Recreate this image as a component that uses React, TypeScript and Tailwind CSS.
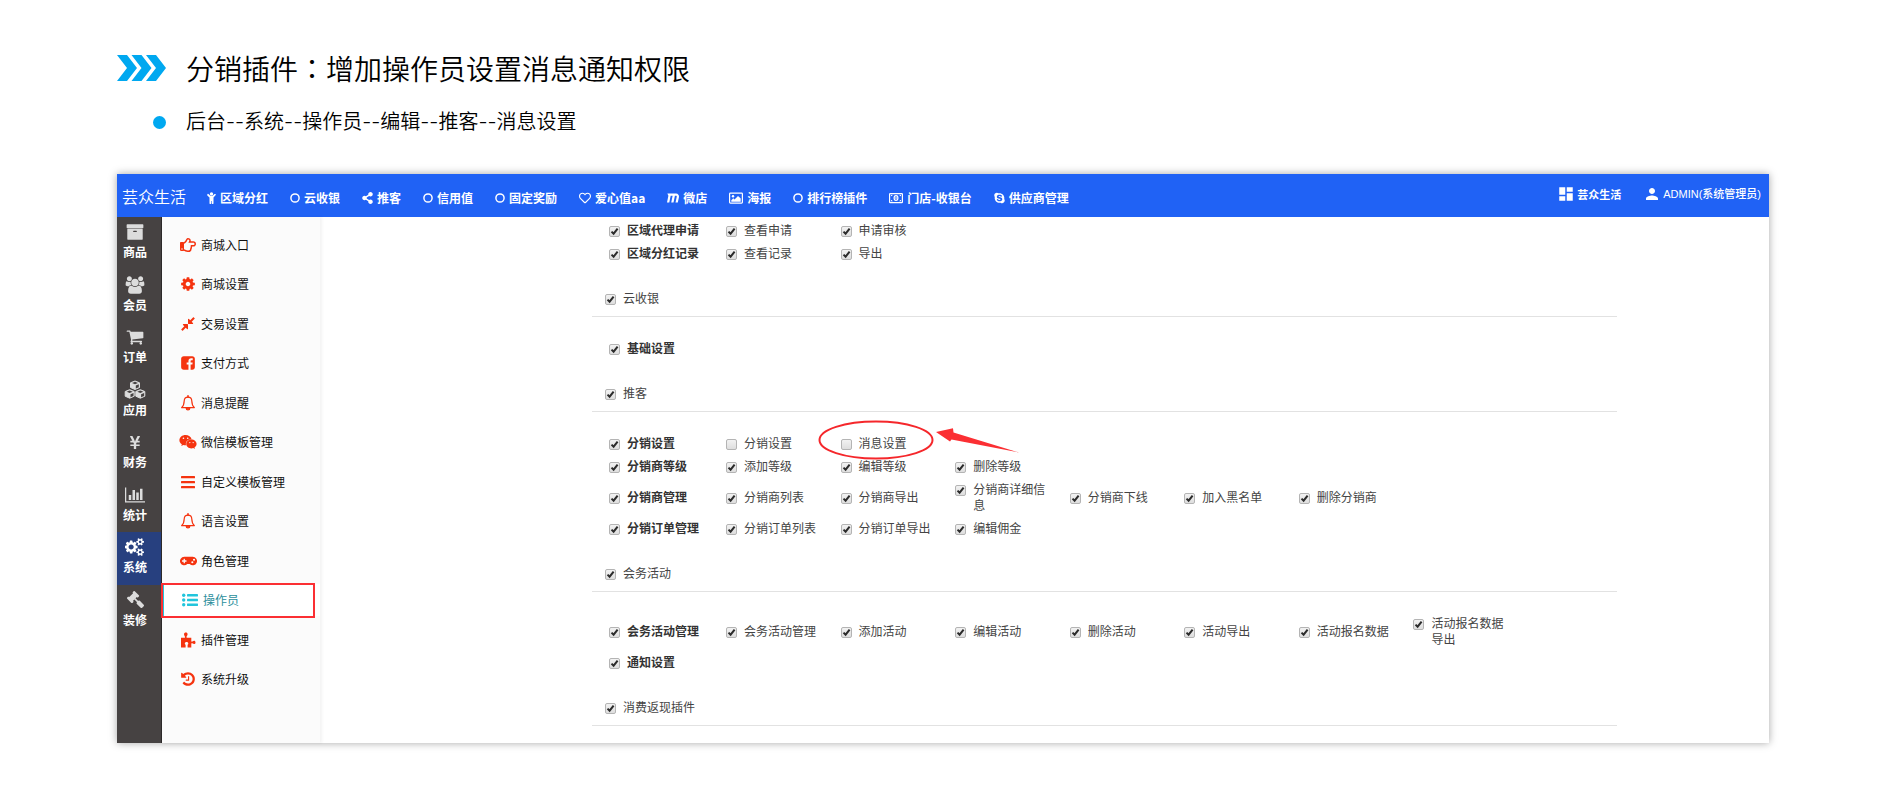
import React, { useState } from 'react';
import clsx from 'clsx';
import {
  FaGamepad,
  FaGavel,
  FaMaxcdn,
  FaRegHandPointRight,
  FaRegHeart,
  FaShareAlt,
  FaSkype,
  FaWeixin,
  FaYenSign,
} from 'react-icons/fa';
import { MdDashboard, MdPerson } from 'react-icons/md';

interface IconProps {
  className?: string;
}

interface GlyphProps extends IconProps {
  d: string;
  viewBox?: string;
}

const Glyph: React.FC<GlyphProps> = ({ d, viewBox = '0 0 1792 1792', className }) => (
  <svg viewBox={viewBox} fill="currentColor" className={className} aria-hidden="true">
    <path d={d} />
  </svg>
);

const ArchiveIcon = ({ className }: IconProps) => (
  <Glyph
    className={className}
    d="M1088 832q0-26-19-45t-45-19h-256q-26 0-45 19t-19 45 19 45 45 19h256q26 0 45-19t19-45zm576-192v960q0 26-19 45t-45 19h-1408q-26 0-45-19t-19-45v-960q0-26 19-45t45-19h1408q26 0 45 19t19 45zm64-448v256q0 26-19 45t-45 19h-1536q-26 0-45-19t-19-45v-256q0-26 19-45t45-19h1536q26 0 45 19t19 45z"
  />
);

const UsersIcon = ({ className }: IconProps) => (
  <Glyph
    className={className}
    viewBox="0 0 2048 1792"
    d="M657 896q-162 5-265 128h-134q-82 0-138-40.5t-56-118.5q0-353 124-353 6 0 43.5 21t97.5 42.5 119 21.5q67 0 133-23-5 37-5 66 0 139 81 256zm1071 637q0 120-73 189.5t-194 69.5h-874q-121 0-194-69.5t-73-189.5q0-53 3.5-103.5t14-109 26.5-108.5 43-97.5 62-81 85.5-53.5 111.5-20q10 0 43 21.5t73 48 107 48 135 21.5 135-21.5 107-48 73-48 43-21.5q61 0 111.5 20t85.5 53.5 62 81 43 97.5 26.5 108.5 14 109 3.5 103.5zm-1024-1277q0 106-75 181t-181 75-181-75-75-181 75-181 181-75 181 75 75 181zm704 384q0 159-112.5 271.5t-271.5 112.5-271.5-112.5-112.5-271.5 112.5-271.5 271.5-112.5 271.5 112.5 112.5 271.5zm576 225q0 78-56 118.5t-138 40.5h-134q-103-123-265-128 81-117 81-256 0-29-5-66 66 23 133 23 59 0 119-21.5t97.5-42.5 43.5-21q124 0 124 353zm-128-609q0 106-75 181t-181 75-181-75-75-181 75-181 181-75 181 75 75 181z"
  />
);

const CartIcon = ({ className }: IconProps) => (
  <Glyph
    className={className}
    d="M704 1536q0 52-38 90t-90 38-90-38-38-90 38-90 90-38 90 38 38 90zm896 0q0 52-38 90t-90 38-90-38-38-90 38-90 90-38 90 38 38 90zm128-1088v512q0 24-16.5 42.5t-40.5 21.5l-1044 122q13 60 13 70 0 16-24 64h920q26 0 45 19t19 45-19 45-45 19h-1024q-26 0-45-19t-19-45q0-11 8-31.5t16-36 21.5-40 15.5-29.5l-177-823h-204q-26 0-45-19t-19-45 19-45 45-19h256q16 0 28.5 6.5t19.5 15.5 13 24.5 8 26 5.5 29.5 4.5 26h1201q26 0 45 19t19 45z"
  />
);

const ChartIcon = ({ className }: IconProps) => (
  <Glyph
    className={className}
    viewBox="0 0 2048 1792"
    d="M640 896v512h-256v-512h256zm384-512v1024h-256v-1024h256zm1024 1152v128h-2048v-1536h128v1408h1920zm-640-896v768h-256v-768h256zm384-384v1152h-256v-1152h256z"
  />
);

const CogIcon = ({ className }: IconProps) => (
  <Glyph
    className={className}
    d="M1152 896q0-106-75-181t-181-75-181 75-75 181 75 181 181 75 181-75 75-181zm512-109v222q0 12-8 23t-20 13l-185 28q-19 54-39 91 35 50 107 138 10 12 10 25t-9 23q-27 37-99 108t-94 71q-12 0-26-9l-138-108q-44 23-91 38-16 136-29 186-7 28-36 28h-222q-14 0-24.5-8.5t-11.5-21.5l-28-184q-49-16-90-37l-141 107q-10 9-25 9-14 0-25-11-126-114-165-168-7-10-7-23 0-12 8-23 15-21 51-66.5t54-70.5q-27-50-41-99l-183-27q-13-2-21-12.5t-8-23.5v-222q0-12 8-23t19-13l186-28q14-46 39-92-40-57-107-138-10-12-10-24 0-10 9-23 26-36 98.5-107.5t94.5-71.5q13 0 26 10l138 107q44-23 91-38 16-136 29-186 7-28 36-28h222q14 0 24.5 8.5t11.5 21.5l28 184q49 16 90 37l142-107q9-9 24-9 13 0 25 10 129 119 165 170 7 8 7 22 0 12-8 23-15 21-51 66.5t-54 70.5q26 50 41 98l183 28q13 2 21 12.5t8 23.5z"
  />
);

const CogsIcon = ({ className }: IconProps) => (
  <Glyph
    className={className}
    viewBox="0 0 1920 1792"
    d="M832 896q0-106-75-181t-181-75-181 75-75 181 75 181 181 75 181-75 75-181zm768 512q0-52-38-90t-90-38-90 38-38 90q0 53 37.5 90.5t90.5 37.5 90.5-37.5 37.5-90.5zm0-1024q0-52-38-90t-90-38-90 38-38 90q0 53 37.5 90.5t90.5 37.5 90.5-37.5 37.5-90.5zm-384 421v185q0 10-7 19.5t-16 10.5l-155 24q-11 35-32 76 34 48 90 115 7 11 7 20 0 12-7 19-23 30-82.5 89.5t-78.5 59.5q-11 0-21-7l-115-90q-37 19-77 31-11 108-23 155-7 24-30 24h-186q-11 0-20-7.5t-10-17.5l-23-153q-34-10-75-31l-118 89q-7 7-20 7-11 0-21-8-144-133-144-160 0-9 7-19 10-14 41-53t47-61q-23-44-35-82l-152-24q-10-1-17-9.5t-7-19.5v-185q0-10 7-19.5t16-10.5l155-24q11-35 32-76-34-48-90-115-7-11-7-20 0-12 7-20 22-30 82-89t79-59q11 0 21 7l115 90q34-18 77-32 11-108 23-154 7-24 30-24h186q11 0 20 7.5t10 17.5l23 153q34 10 75 31l118-89q8-7 20-7 11 0 21 8 144 133 144 160 0 8-7 19-12 16-42 54t-45 60q23 48 34 82l152 23q10 2 17 10.5t7 19.5zm640 533v140q0 16-149 31-12 27-30 52 51 113 51 138 0 4-4 7-122 71-124 71-8 0-46-47t-52-68q-20 2-30 2t-30-2q-14 21-52 68t-46 47q-2 0-124-71-4-3-4-7 0-25 51-138-18-25-30-52-149-15-149-31v-140q0-16 149-31 13-29 30-52-51-113-51-138 0-4 4-7 4-2 35-20t59-34 30-16q8 0 46 46.5t52 67.5q20-2 30-2t30 2q51-71 92-112l6-2q4 0 124 70 4 3 4 7 0 25-51 138 17 23 30 52 149 15 149 31zm0-1024v140q0 16-149 31-12 27-30 52 51 113 51 138 0 4-4 7-122 71-124 71-8 0-46-47t-52-68q-20 2-30 2t-30-2q-14 21-52 68t-46 47q-2 0-124-71-4-3-4-7 0-25 51-138-18-25-30-52-149-15-149-31v-140q0-16 149-31 13-29 30-52-51-113-51-138 0-4 4-7 4-2 35-20t59-34 30-16q8 0 46 46.5t52 67.5q20-2 30-2t30 2q51-71 92-112l6-2q4 0 124 70 4 3 4 7 0 25-51 138 17 23 30 52 149 15 149 31z"
  />
);

const CompressIcon = ({ className }: IconProps) => (
  <Glyph
    className={className}
    d="M896 960v448q0 26-19 45t-45 19-45-19l-144-144-332 332q-10 10-23 10t-23-10l-114-114q-10-10-10-23t10-23l332-332-144-144q-19-19-19-45t19-45 45-19h448q26 0 45 19t19 45zm755-672q0 13-10 23l-332 332 144 144q19 19 19 45t-19 45-45 19h-448q-26 0-45-19t-19-45v-448q0-26 19-45t45-19 45 19l144 144 332-332q10-10 23-10t23 10l114 114q10 10 10 23z"
  />
);

const FacebookIcon = ({ className }: IconProps) => (
  <Glyph
    className={className}
    d="M1376 128q119 0 203.5 84.5t84.5 203.5v960q0 119-84.5 203.5t-203.5 84.5h-188v-595h199l30-232h-229v-148q0-56 23.5-84t91.5-28l122-1v-207q-63-9-178-9-136 0-217.5 80t-81.5 226v171h-200v232h200v595h-532q-119 0-203.5-84.5t-84.5-203.5v-960q0-119 84.5-203.5t203.5-84.5h960z"
  />
);

const HistoryIcon = ({ className }: IconProps) => (
  <Glyph
    className={className}
    d="M1664 896q0 156-61 298t-164 245-245 164-298 61q-172 0-327-72.5t-264-204.5q-7-10-6.5-22.5t8.5-20.5l137-138q10-9 25-9 16 2 23 12 73 95 179 147t225 52q104 0 198.5-40.5t163.5-109.5 109.5-163.5 40.5-198.5-40.5-198.5-109.5-163.5-163.5-109.5-198.5-40.5q-98 0-188 35.5t-160 101.5l137 138q31 30 14 69-17 40-59 40h-448q-26 0-45-19t-19-45v-448q0-42 40-59 39-17 69 14l130 129q107-101 244.5-156.5t284.5-55.5q156 0 298 61t245 164 164 245 61 298zm-640-288v448q0 14-9 23t-23 9h-320q-14 0-23-9t-9-23v-64q0-14 9-23t23-9h224v-352q0-14 9-23t23-9h64q14 0 23 9t9 23z"
  />
);

const CubesIcon = ({ className }: IconProps) => (
  <svg viewBox="0 0 22 19" className={className} aria-hidden="true">
    <g fill="currentColor" stroke="currentColor" strokeLinejoin="round">
      <path d="M11 1l4.500 1.800v4.700L11 9.500 6.500 7.500V2.800z" />
      <path d="M5.700 9.700l4.500 1.800v4.700l-4.500 2-4.500-2v-4.700z" />
      <path d="M16.300 9.700l4.500 1.800v4.700l-4.500 2-4.500-2v-4.700z" />
    </g>
    <g fill="#464242">
      <path d="M11 1.800l3 1.200-3 1.300L8 3zM11.800 5.600l3-1.300v3l-3 1.300z" />
      <path d="M5.700 10.500l3 1.200-3 1.300-3-1.300zM6.500 14.300l3-1.300v3l-3 1.300z" />
      <path d="M16.300 10.500l3 1.200-3 1.300-3-1.300zM17.100 14.300l3-1.300v3l-3 1.300z" />
    </g>
  </svg>
);

const ChildIcon = ({ className }: IconProps) => (
  <svg viewBox="0 0 9 12" fill="currentColor" className={className} aria-hidden="true">
    <circle cx="4.500" cy="1.900" r="1.700" />
    <path d="M.3 2.300a.8.800 0 0 1 1.200-.2L3.300 3.700h2.400l1.800-1.600a.8.800 0 0 1 1.200 1L6.500 5.400v5.800a.8.800 0 0 1-1.700 0V9h-.6v2.200a.8.800 0 0 1-1.700 0V5.400L.3 3.400z" />
  </svg>
);

const CircleIcon = ({ className }: IconProps) => (
  <svg viewBox="0 0 11 12" fill="none" stroke="currentColor" strokeWidth="1.600" className={className} aria-hidden="true">
    <circle cx="5.500" cy="6" r="4.500" />
  </svg>
);

const PictureIcon = ({ className }: IconProps) => (
  <svg viewBox="0 0 14 12" fill="currentColor" className={className} aria-hidden="true">
    <rect x=".6" y="1.100" width="12.800" height="10" rx=".8" fill="none" stroke="currentColor" strokeWidth="1.200" />
    <circle cx="4" cy="4.200" r="1.200" />
    <path d="M2.300 9.800V8.200l2-2 1.200 1.200 3.500-3.500 2.700 2.700v3.200z" />
  </svg>
);

const MoneyIcon = ({ className }: IconProps) => (
  <svg viewBox="0 0 14 12" fill="none" stroke="currentColor" className={className} aria-hidden="true">
    <rect x=".6" y="1.600" width="12.800" height="9" rx=".6" strokeWidth="1.200" />
    <path d="M3 2.800v.8H2M11 2.800v.8h1M3 9.400v-.8H2M11 9.400v-.8h1" />
    <ellipse cx="7" cy="6.100" rx="1.900" ry="2.400" strokeWidth="1.200" />
    <path d="M7 5v2.200" />
  </svg>
);

const BellIcon = ({ className }: IconProps) => (
  <svg viewBox="0 0 16 16" fill="none" stroke="currentColor" strokeWidth="1.200" strokeLinejoin="round" className={className} aria-hidden="true">
    <path d="M8 2.200C5.600 2.200 4.300 4 4.200 6c-.1 3.200-.7 5-2.600 6.600h12.800C12.500 11 11.900 9.200 11.800 6 11.700 4 10.400 2.200 8 2.200z" />
    <path d="M8 .8v1.400" strokeWidth="1.600" strokeLinecap="round" />
    <path d="M6.200 13.200a1.800 1.800 0 0 0 3.600 0z" fill="currentColor" />
  </svg>
);

const BarsIcon = ({ className }: IconProps) => (
  <svg viewBox="0 0 16 16" fill="currentColor" className={className} aria-hidden="true">
    <rect x="1" y="2" width="14" height="2.200" rx=".5" />
    <rect x="1" y="7" width="14" height="2.200" rx=".5" />
    <rect x="1" y="12" width="14" height="2.200" rx=".5" />
  </svg>
);

const ListIcon = ({ className }: IconProps) => (
  <svg viewBox="0 0 16 14" fill="currentColor" className={className} aria-hidden="true">
    <circle cx="1.700" cy="2.200" r="1.700" />
    <circle cx="1.700" cy="7" r="1.700" />
    <circle cx="1.700" cy="11.800" r="1.700" />
    <rect x="5" y="1" width="11" height="2.400" rx=".4" />
    <rect x="5" y="5.800" width="11" height="2.400" rx=".4" />
    <rect x="5" y="10.600" width="11" height="2.400" rx=".4" />
  </svg>
);

const PuzzleIcon = ({ className }: IconProps) => (
  <svg viewBox="0 0 16 16" fill="currentColor" className={className} aria-hidden="true">
    <path d="M4.800 4.200C4.300 3.600 4 3 4 2.300 4 1.300 4.800.6 5.800.6s1.800.7 1.800 1.700c0 .7-.3 1.300-1 1.900v1.600h4.700v3.700c.6.200 1 .2 1.500-.2.400-.3.700-.5 1.200-.5.900 0 1.500.7 1.500 1.600s-.6 1.700-1.500 1.700c-.5 0-.8-.2-1.200-.5-.5-.4-.9-.4-1.500-.1V15.400H7.600v-2.600c.5-.4.700-.8.700-1.300 0-.9-.7-1.600-1.700-1.600s-1.800.7-1.800 1.600c0 .5.300.9.800 1.300v2.600H1V5.800h4z" />
  </svg>
);

const navItems = [
  { name: '区域分红', icon: <ChildIcon className="w-[9px] h-3" /> },
  { name: '云收银', icon: <CircleIcon className="w-[10px] h-3" /> },
  { name: '推客', icon: <FaShareAlt className="w-[11px] h-3" /> },
  { name: '信用值', icon: <CircleIcon className="w-[10px] h-3" /> },
  { name: '固定奖励', icon: <CircleIcon className="w-[10px] h-3" /> },
  { name: '爱心值aa', icon: <FaRegHeart className="w-3 h-3" /> },
  { name: '微店', icon: <FaMaxcdn className="w-3 h-3" /> },
  { name: '海报', icon: <PictureIcon className="w-3.5 h-3" /> },
  { name: '排行榜插件', icon: <CircleIcon className="w-[10px] h-3" /> },
  { name: '门店-收银台', icon: <MoneyIcon className="w-3.5 h-3" /> },
  { name: '供应商管理', icon: <FaSkype className="w-[11px] h-3" /> },
];

const mainMenu = [
  { name: '商品', icon: <ArchiveIcon className="w-[18px] h-[18px]" /> },
  { name: '会员', icon: <UsersIcon className="w-5 h-[18px]" /> },
  { name: '订单', icon: <CartIcon className="w-[18px] h-[18px]" /> },
  { name: '应用', icon: <CubesIcon className="w-[22px] h-[19px]" /> },
  { name: '财务', icon: <FaYenSign className="w-4 h-[15px]" /> },
  { name: '统计', icon: <ChartIcon className="w-5 h-[18px]" /> },
  { name: '系统', icon: <CogsIcon className="w-5 h-[18px]" /> },
  { name: '装修', icon: <FaGavel className="w-[17px] h-[17px] -scale-x-100" /> },
];

const subMenu = [
  { name: '商城入口', icon: <FaRegHandPointRight className="w-4 h-4" /> },
  { name: '商城设置', icon: <CogIcon className="w-4 h-4" /> },
  { name: '交易设置', icon: <CompressIcon className="w-4 h-4" /> },
  { name: '支付方式', icon: <FacebookIcon className="w-4 h-4" /> },
  { name: '消息提醒', icon: <BellIcon className="w-4 h-4" /> },
  { name: '微信模板管理', icon: <FaWeixin className="w-[18px] h-[18px]" /> },
  { name: '自定义模板管理', icon: <BarsIcon className="w-4 h-4" /> },
  { name: '语言设置', icon: <BellIcon className="w-4 h-4" /> },
  { name: '角色管理', icon: <FaGamepad className="w-[17px] h-4" /> },
  { name: '操作员', icon: <ListIcon className="w-4 h-3.5" /> },
  { name: '插件管理', icon: <PuzzleIcon className="w-4 h-4" /> },
  { name: '系统升级', icon: <HistoryIcon className="w-4 h-4" /> },
];

interface PermissionRow {
  name: string;
  actions: string[];
}

interface PermissionGroup {
  title?: string;
  rows: PermissionRow[];
}

const groups: PermissionGroup[] = [
  {
    rows: [
      { name: '区域代理申请', actions: ['查看申请', '申请审核'] },
      { name: '区域分红记录', actions: ['查看记录', '导出'] },
    ],
  },
  { title: '云收银', rows: [{ name: '基础设置', actions: [] }] },
  {
    title: '推客',
    rows: [
      { name: '分销设置', actions: ['分销设置', '消息设置'] },
      { name: '分销商等级', actions: ['添加等级', '编辑等级', '删除等级'] },
      { name: '分销商管理', actions: ['分销商列表', '分销商导出', '分销商详细信息', '分销商下线', '加入黑名单', '删除分销商'] },
      { name: '分销订单管理', actions: ['分销订单列表', '分销订单导出', '编辑佣金'] },
    ],
  },
  {
    title: '会务活动',
    rows: [
      { name: '会务活动管理', actions: ['会务活动管理', '添加活动', '编辑活动', '删除活动', '活动导出', '活动报名数据', '活动报名数据导出'] },
      { name: '通知设置', actions: [] },
    ],
  },
  { title: '消费返现插件', rows: [] },
];

const uncheckedKeys = ['推客/分销设置/分销设置', '推客/分销设置/消息设置'];

interface CheckItemProps {
  label: string;
  bold?: boolean;
  defaultChecked: boolean;
}

const CheckItem: React.FC<CheckItemProps> = ({ label, bold, defaultChecked }) => {
  const [checked, setChecked] = useState(defaultChecked);

  return (
    <label className={clsx('flex items-start gap-[7px] leading-4', bold ? 'font-bold text-[#333]' : 'text-[#444]')}>
      <span className="relative mt-1 block w-[11px] h-[11px] shrink-0">
        <input
          type="checkbox"
          checked={checked}
          onChange={(e) => setChecked(e.target.checked)}
          className="block w-[11px] h-[11px] appearance-none rounded-[2px] border border-[#b4b4b4] bg-linear-to-b from-[#f2f2f2] to-[#dedede]"
        />
        {checked && (
          <svg viewBox="0 0 11 11" className="pointer-events-none absolute inset-0" fill="none" stroke="#2b2b2b" strokeWidth="2">
            <path d="M2.500 5.600 4.600 7.700 8.600 2.600" />
          </svg>
        )}
      </span>
      <span>{label}</span>
    </label>
  );
};

const Callout = () => (
  <svg viewBox="0 0 202 42" className="pointer-events-none absolute -left-[23px] -top-4 w-[202px] h-[42px]" aria-hidden="true">
    <ellipse cx="58" cy="21" rx="56.500" ry="18.500" fill="none" stroke="#f5272b" strokeWidth="2" />
    <path d="M118 13 135 9.200 135.500 13.500 201 33.500 133.500 20.500 132 22.500z" fill="#fb2f33" />
  </svg>
);

const App: React.FC = () => {
  const [activeMenu, setActiveMenu] = useState('系统');
  const [activeSub, setActiveSub] = useState('操作员');

  return (
    <div className="bg-white pl-[117px] pr-[118px] pt-[52px] pb-[57px] font-['Noto_Sans_CJK_SC',sans-serif] text-xs">
      {/* Page heading */}
      <div className="flex items-center gap-5 text-black">
        <svg viewBox="0 0 49 26" className="w-[49px] h-[26px]" fill="#00a8f0" aria-hidden="true">
          <path d="M0 0h10l10 13-10 13H0l10-13zM14.500 0h10l10 13-10 13h-10l10-13zM29 0h10l10 13-10 13H29l10-13z" />
        </svg>
        <h1 className="text-[28px] leading-8 font-[350]">
          分销插件<span className="font-['Noto_Sans_CJK_TC',sans-serif]">：</span>增加操作员设置消息通知权限
        </h1>
      </div>
      <div className="mt-[26px] flex items-center gap-5 pl-9 text-black">
        <span className="w-[13px] h-[13px] rounded-full bg-[#00a8f0]"></span>
        <p className="font-[Inter,'Noto_Sans_CJK_SC',sans-serif] text-xl leading-6 font-[350]">后台--系统--操作员--编辑--推客--消息设置</p>
      </div>

      {/* Admin window */}
      <div className="mt-10 shadow-[0_0_8px_rgba(0,0,0,0.35)]">
        <header className="flex items-center justify-between bg-[#2062f5] h-[43px] pl-[5px] pr-2 text-white">
          <div className="flex items-center gap-[21px]">
            <span className="text-base leading-5 font-[350]">芸众生活</span>
            <nav className="flex items-center gap-[22px] pt-1 font-bold">
              {navItems.map((item) => (
                <a key={item.name} href="#" className="flex items-center gap-1 leading-4 whitespace-nowrap">
                  {item.icon}
                  <span>{item.name}</span>
                </a>
              ))}
            </nav>
          </div>
          <div className="flex items-center gap-[22px] pb-[3px] text-[11px] leading-4">
            <a href="#" className="flex items-center gap-0.5 font-bold">
              <MdDashboard className="w-[18px] h-[18px]" />
              芸众生活
            </a>
            <a href="#" className="flex items-center gap-0.5 font-medium font-['Liberation_Sans','Noto_Sans_CJK_SC',sans-serif]">
              <MdPerson className="w-[18px] h-[18px]" />
              ADMIN(系统管理员)
            </a>
          </div>
        </header>

        <div className="flex">
          {/* Main menu */}
          <nav className="w-[45px] shrink-0 bg-[#464242] border-r border-[#2c2929]">
            <div className="grid grid-rows-8 h-[420px]">
              {mainMenu.map((item) => (
                <button
                  key={item.name}
                  onClick={() => setActiveMenu(item.name)}
                  className={clsx(
                    'flex flex-col items-center pt-[6px] pr-2 font-bold leading-4',
                    activeMenu === item.name ? 'bg-[#27407f] text-white' : 'text-[#dcdcdc]'
                  )}
                >
                  <span className="flex items-center justify-center h-[18px]">{item.icon}</span>
                  <span className="mt-[3px] text-white">{item.name}</span>
                </button>
              ))}
            </div>
          </nav>

          {/* Sub menu */}
          <nav className="w-[158px] shrink-0 bg-[#fbfbfb] pt-2 shadow-[2px_0_3px_rgba(0,0,0,0.05)]">
            <div className="grid grid-rows-12 h-[474px]">
              {subMenu.map((item) => (
                <div key={item.name} className="relative flex items-center">
                  <a
                    href="#"
                    onClick={() => setActiveSub(item.name)}
                    className={clsx(
                      'flex items-center gap-1 w-full h-8 pl-[17px] leading-4',
                      activeSub === item.name ? 'bg-white border-l-2 border-[#22c5dc] text-[#2c8f9c]' : 'text-[#111]'
                    )}
                  >
                    <span
                      className={clsx(
                        'flex items-center justify-center w-[18px]',
                        activeSub === item.name ? 'text-[#22c5dc]' : 'text-[#f5330f]'
                      )}
                    >
                      {item.icon}
                    </span>
                    {item.name}
                  </a>
                  {item.name === '操作员' && (
                    <span className="pointer-events-none absolute -left-px right-[5px] inset-y-0.5 border-2 border-[#fb2f33]"></span>
                  )}
                </div>
              ))}
            </div>
          </nav>

          {/* Permissions */}
          <main className="flex-1 pl-[272px] pr-[152px] pb-[17px]">
            {groups.map((group, groupIndex) => (
              <section key={groupIndex}>
                {group.title && (
                  <div className="border-b border-[#e2e2e2] pt-[25px] pb-2.5 pl-[13px]">
                    <CheckItem label={group.title} defaultChecked />
                  </div>
                )}
                {group.rows.length > 0 && (
                  <div className={group.title ? 'pt-5' : 'pt-0.5'}>
                    {group.rows.map((row) => (
                      <div key={row.name} className="grid grid-cols-[117px_repeat(7,minmax(0,1fr))] items-center pt-[3px] pb-1 pl-[17px] pr-[89px]">
                        <CheckItem label={row.name} bold defaultChecked />
                        {row.actions.map((action) => (
                          <div key={action} className="relative pr-4">
                            <CheckItem
                              label={action}
                              defaultChecked={!uncheckedKeys.includes(`${group.title}/${row.name}/${action}`)}
                            />
                            {action === '消息设置' && <Callout />}
                          </div>
                        ))}
                      </div>
                    ))}
                  </div>
                )}
              </section>
            ))}
          </main>
        </div>
      </div>
    </div>
  );
};

export default App;
